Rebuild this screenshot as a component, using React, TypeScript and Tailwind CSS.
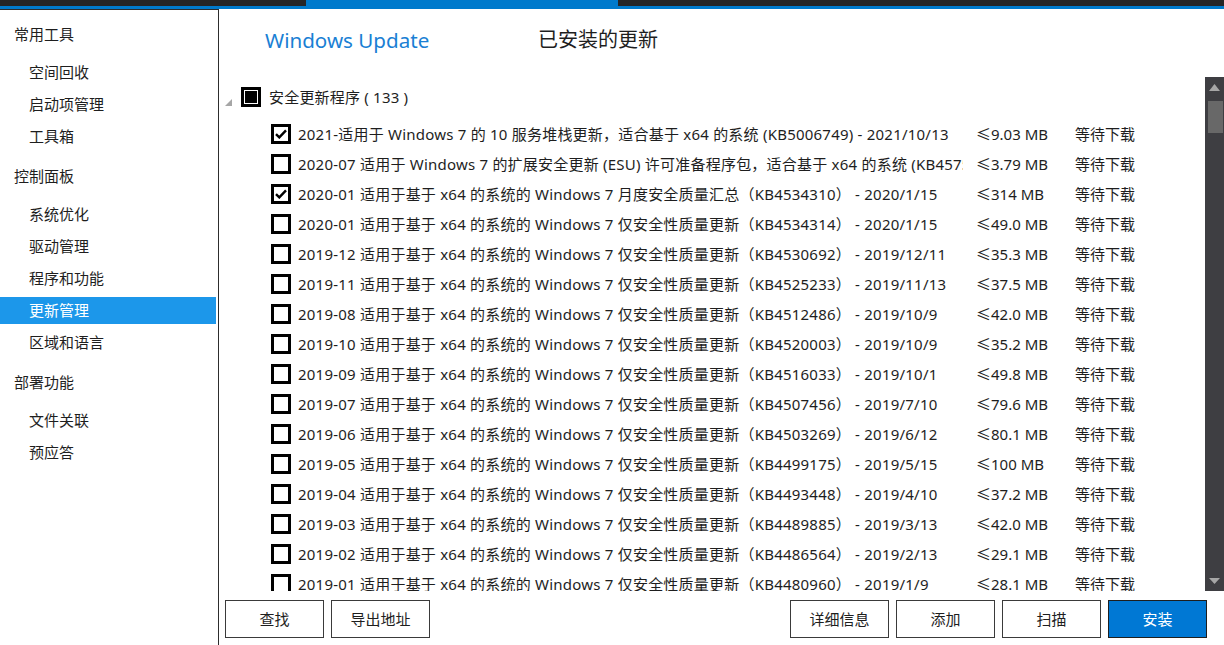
import { Fragment } from "react";

type TUpdate = {
  checked: boolean;
  title: string;
  size: string;
};

const FONT = "font-['Noto_Sans','Noto_Sans_CJK_SC',sans-serif]";

const sidebar = [
  { heading: "常用工具", items: ["空间回收", "启动项管理", "工具箱"] },
  { heading: "控制面板", items: ["系统优化", "驱动管理", "程序和功能", "更新管理", "区域和语言"] },
  { heading: "部署功能", items: ["文件关联", "预应答"] },
];

const q = (ym: string, kb: string, date: string) =>
  `${ym} 适用于基于 x64 的系统的 Windows 7 仅安全性质量更新（${kb}） - ${date}`;

const updates: TUpdate[] = [
  { checked: true, title: "2021-适用于 Windows 7 的 10 服务堆栈更新，适合基于 x64 的系统 (KB5006749) - 2021/10/13", size: "≤9.03 MB" },
  { checked: false, title: "2020-07 适用于 Windows 7 的扩展安全更新 (ESU) 许可准备程序包，适合基于 x64 的系统 (KB4575903) - 2020/7/10", size: "≤3.79 MB" },
  { checked: true, title: "2020-01 适用于基于 x64 的系统的 Windows 7 月度安全质量汇总（KB4534310） - 2020/1/15", size: "≤314 MB" },
  { checked: false, title: q("2020-01", "KB4534314", "2020/1/15"), size: "≤49.0 MB" },
  { checked: false, title: q("2019-12", "KB4530692", "2019/12/11"), size: "≤35.3 MB" },
  { checked: false, title: q("2019-11", "KB4525233", "2019/11/13"), size: "≤37.5 MB" },
  { checked: false, title: q("2019-08", "KB4512486", "2019/10/9"), size: "≤42.0 MB" },
  { checked: false, title: q("2019-10", "KB4520003", "2019/10/9"), size: "≤35.2 MB" },
  { checked: false, title: q("2019-09", "KB4516033", "2019/10/1"), size: "≤49.8 MB" },
  { checked: false, title: q("2019-07", "KB4507456", "2019/7/10"), size: "≤79.6 MB" },
  { checked: false, title: q("2019-06", "KB4503269", "2019/6/12"), size: "≤80.1 MB" },
  { checked: false, title: q("2019-05", "KB4499175", "2019/5/15"), size: "≤100 MB" },
  { checked: false, title: q("2019-04", "KB4493448", "2019/4/10"), size: "≤37.2 MB" },
  { checked: false, title: q("2019-03", "KB4489885", "2019/3/13"), size: "≤42.0 MB" },
  { checked: false, title: q("2019-02", "KB4486564", "2019/2/13"), size: "≤29.1 MB" },
  { checked: false, title: q("2019-01", "KB4480960", "2019/1/9"), size: "≤28.1 MB" },
];

function CheckBox({ checked }: { checked: boolean }) {
  return (
    <span className="flex h-[20px] w-[20px] shrink-0 items-center justify-center border-[3px] border-black bg-white">
      {checked && (
        <svg width="12" height="10" viewBox="0 0 12 10">
          <path d="M1 5.2 L4.3 8.4 L11 1.4" fill="none" stroke="#000" strokeWidth="2.4" />
        </svg>
      )}
    </span>
  );
}

function Button({ label, primary }: { label: string; primary?: boolean }) {
  return (
    <button
      className={
        primary
          ? "h-[38px] w-[99px] border border-[#1e1e1e] bg-[#0078d4] text-[15px] text-white"
          : "h-[38px] w-[99px] border border-[#3a3a3a] bg-white text-[15px] text-[#1e1e1e]"
      }
    >
      {label}
    </button>
  );
}

export default function App() {
  return (
    <div className={`flex h-[645px] w-[1224px] flex-col overflow-hidden bg-white text-[#1e1e1e] ${FONT}`}>
      {/* title strip */}
      <div className="flex h-[6px] bg-[#252526]">
        <div className="w-[306px]" />
        <div className="w-[312px] bg-[#007acc]" />
      </div>
      <div className="h-[3px] bg-[#007acc]" />

      <div className="flex min-h-0 flex-1">
        {/* sidebar */}
        <div className="w-[219px] shrink-0 border-r border-t border-[#2d2d2d] pt-[12px]">
          {sidebar.map((group) => (
            <Fragment key={group.heading}>
              <div className="flex h-[24px] items-center pl-[14px] text-[15px]">{group.heading}</div>
              <div className="mb-[14px] mt-[13px] flex flex-col gap-[5px] pr-[2px]">
                {group.items.map((item) => (
                  <div
                    key={item}
                    className={
                      item === "更新管理"
                        ? "flex h-[27px] items-center bg-[#1c97ea] pl-[29px] text-[15px] text-white"
                        : "flex h-[27px] items-center pl-[29px] text-[15px]"
                    }
                  >
                    {item}
                  </div>
                ))}
              </div>
            </Fragment>
          ))}
        </div>

        {/* main */}
        <div className="flex min-w-0 flex-1 flex-col">
          <div className="flex h-[68px] shrink-0 items-start pt-[17px]">
            <div className="ml-[46px] w-[273px] text-[20.6px] leading-[28px] text-[#1a7fd4]">Windows Update</div>
            <div className="text-[20px] leading-[28px]">已安装的更新</div>
          </div>

          <div className="flex h-[514px] shrink-0">
            <div className="min-w-0 flex-1 overflow-hidden">
              <div className="mt-[5px] flex h-[30px] items-center">
                <svg className="ml-[6px] mt-[10px]" width="7" height="7" viewBox="0 0 7 7">
                  <path d="M7 0 V7 H0 Z" fill="#a6a6a6" />
                </svg>
                <span className="ml-[9px] flex h-[20px] w-[20px] items-center justify-center border-[3px] border-black p-[1px]">
                  <span className="h-full w-full bg-black" />
                </span>
                <span className="ml-[8px] text-[15px] tracking-[0.2px]">安全更新程序 ( 133 )</span>
              </div>
              <div className="mt-[7px]">
                {updates.map((u) => (
                  <div key={u.title} className="flex h-[30px] items-center whitespace-nowrap text-[15px]">
                    <span className="ml-[52px]">
                      <CheckBox checked={u.checked} />
                    </span>
                    <span className="ml-[7px] w-[665px] overflow-hidden tracking-[0.22px]">{u.title}</span>
                    <span className="ml-[13px] w-[99px]">{u.size}</span>
                    <span>等待下载</span>
                  </div>
                ))}
              </div>
            </div>

            {/* scrollbar */}
            <div className="flex w-[19px] shrink-0 flex-col items-center bg-[#3e3e42]">
              <svg className="mt-[7px]" width="11" height="7" viewBox="0 0 11 7">
                <path d="M5.5 0 L11 7 H0 Z" fill="#a6a6a6" />
              </svg>
              <div className="ml-[2px] mt-[10px] h-[32px] w-[15px] bg-[#686868]" />
              <div className="flex-1" />
              <svg className="mb-[7px]" width="11" height="6" viewBox="0 0 11 6">
                <path d="M0 0 H11 L5.5 6 Z" fill="#a6a6a6" />
              </svg>
            </div>
          </div>

          {/* action bar */}
          <div className="flex flex-1 items-start pl-[6px] pr-[17px] pt-[9px]">
            <div className="flex gap-[7px]">
              <Button label="查找" />
              <Button label="导出地址" />
            </div>
            <div className="flex-1" />
            <div className="flex gap-[7px]">
              <Button label="详细信息" />
              <Button label="添加" />
              <Button label="扫描" />
              <Button label="安装" primary />
            </div>
          </div>
        </div>
      </div>
    </div>
  );
}
